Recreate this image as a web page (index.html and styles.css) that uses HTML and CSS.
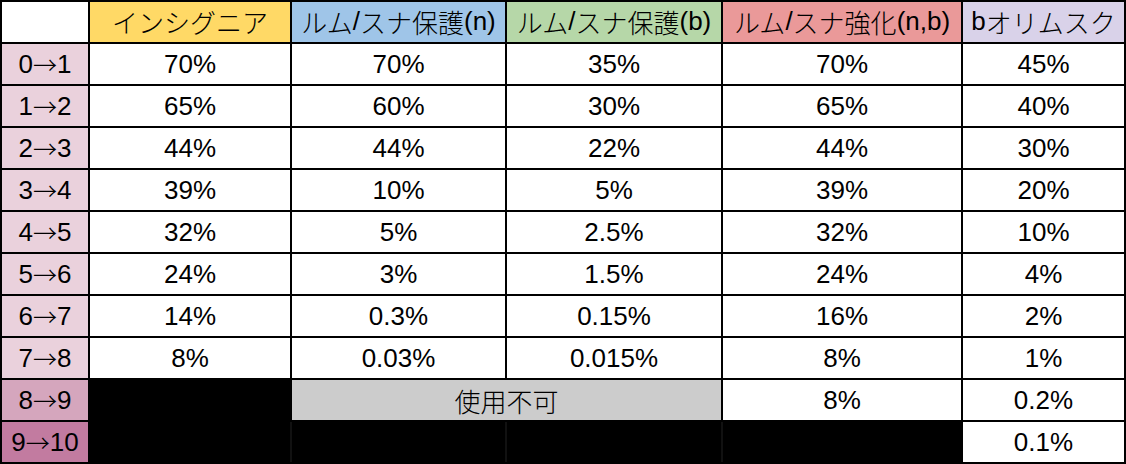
FILE: index.html
```html
<!DOCTYPE html>
<html lang="ja">
<head>
<meta charset="utf-8">
<title>強化確率表</title>
<link rel="stylesheet" href="styles.css">
</head>
<body>
<div class="sheet">
  <div class="c blank"></div>
  <div class="c h yellow"><span class="jp">インシグニア</span></div>
  <div class="c h blue"><span class="jp">ルム</span>/<span class="jp">スナ保護</span>(n)</div>
  <div class="c h green"><span class="jp">ルム</span>/<span class="jp">スナ保護</span>(b)</div>
  <div class="c h red"><span class="jp">ルム</span>/<span class="jp">スナ強化</span>(n,b)</div>
  <div class="c h purple">b<span class="jp">オリムスク</span></div>

  <div class="c lv lv1">0<span class="arr">→</span>1</div>
  <div class="c">70%</div><div class="c">70%</div><div class="c">35%</div><div class="c">70%</div><div class="c">45%</div>

  <div class="c lv lv1">1<span class="arr">→</span>2</div>
  <div class="c">65%</div><div class="c">60%</div><div class="c">30%</div><div class="c">65%</div><div class="c">40%</div>

  <div class="c lv lv1">2<span class="arr">→</span>3</div>
  <div class="c">44%</div><div class="c">44%</div><div class="c">22%</div><div class="c">44%</div><div class="c">30%</div>

  <div class="c lv lv1">3<span class="arr">→</span>4</div>
  <div class="c">39%</div><div class="c">10%</div><div class="c">5%</div><div class="c">39%</div><div class="c">20%</div>

  <div class="c lv lv1">4<span class="arr">→</span>5</div>
  <div class="c">32%</div><div class="c">5%</div><div class="c">2.5%</div><div class="c">32%</div><div class="c">10%</div>

  <div class="c lv lv1">5<span class="arr">→</span>6</div>
  <div class="c">24%</div><div class="c">3%</div><div class="c">1.5%</div><div class="c">24%</div><div class="c">4%</div>

  <div class="c lv lv1">6<span class="arr">→</span>7</div>
  <div class="c">14%</div><div class="c">0.3%</div><div class="c">0.15%</div><div class="c">16%</div><div class="c">2%</div>

  <div class="c lv lv1">7<span class="arr">→</span>8</div>
  <div class="c">8%</div><div class="c">0.03%</div><div class="c">0.015%</div><div class="c">8%</div><div class="c">1%</div>

  <div class="c lv lv2">8<span class="arr">→</span>9</div>
  <div class="c na"></div>
  <div class="c grey span2"><span class="jp">使用不可</span></div>
  <div class="c">8%</div><div class="c">0.2%</div>

  <div class="c lv lv3">9<span class="arr">→</span>10</div>
  <div class="c na"></div>
  <div class="c na faint"></div>
  <div class="c na faint"></div>
  <div class="c na faint"></div>
  <div class="c">0.1%</div>
</div>
</body>
</html>
```

FILE: styles.css
```css
html, body {
  margin: 0;
  padding: 0;
  background: #ffffff;
}

.sheet {
  width: 1126px;
  height: 464px;
  box-sizing: border-box;
  padding: 2px;
  background: #000000;
  display: grid;
  grid-template-columns: 86px 200px 213px 214px 238px 161px;
  grid-template-rows: repeat(11, 40px);
  gap: 2px;
  font-family: "Liberation Sans", Arial, "Noto Sans CJK JP", sans-serif;
  font-size: 26px;
  font-weight: 400;
  color: #000000;
}

.c {
  background: #ffffff;
  display: flex;
  align-items: center;
  justify-content: center;
  white-space: nowrap;
  overflow: hidden;
}

.h {
  padding-bottom: 2px;
}

.jp {
  font-family: "Noto Sans CJK JP", sans-serif;
  font-weight: 300;
}

.blank { background: #ffffff; }
.yellow { background: #ffd966; }
.blue { background: #9fc5e8; }
.green { background: #b6d7a8; }
.red { background: #ea9999; }
.purple { background: #d9d2e9; }

.lv1 { background: #ead1dc; }
.lv2 { background: #d5a6bd; }
.lv3 { background: #c27ba0; }

.arr {
  font-family: "Noto Sans CJK JP", sans-serif;
  font-weight: 300;
  font-size: 24px;
  line-height: 1;
}

.na { background: #000000; }
.faint { box-shadow: -2px 0 0 #111111; }

.grey { background: #cccccc; }
.span2 { grid-column: span 2; }
```
